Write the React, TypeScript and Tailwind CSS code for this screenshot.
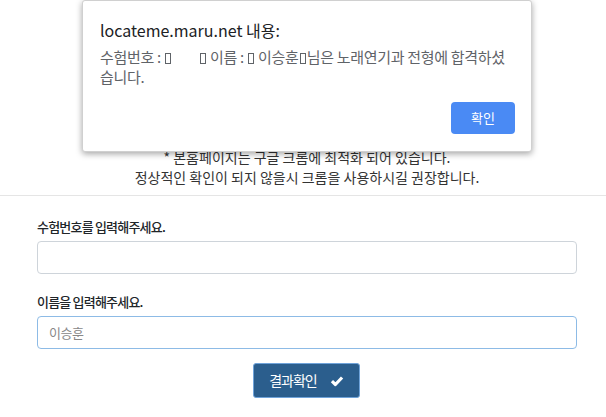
const KR = { fontFamily: '"Noto Sans CJK KR", "Noto Sans", sans-serif' };

function Tofu() {
  return <span className="inline-block w-[6px] h-[11px] border border-[#5f6368] align-[-1px] mx-[1px]" />;
}

function CheckMark() {
  return (
    <svg viewBox="0 0 16 16" className="w-[14px] h-[14px]" fill="none" stroke="currentColor" strokeWidth={3.6} strokeLinejoin="round">
      <path d="M2.2 8.2 L6.2 12 L13.8 4" />
    </svg>
  );
}

function AlertDialog() {
  return (
    <div className="absolute left-[82px] top-0 w-[450px] h-[152px] bg-white border border-[#d0d0d0] rounded-[3px] shadow-[0_2px_6px_rgba(0,0,0,0.35)]">
      <div className="pl-[17px] pr-[18px] pt-[18px]">
        <h2 className="text-[16px] leading-[22px] text-[#202124]">locateme.maru.net 내용:</h2>
        <p className="mt-[6px] text-[15px] leading-[20px] text-[#5f6368] tracking-[-0.3px]">
          수험번호 : <Tofu />
          <span className="inline-block w-[27px]" />
          <Tofu /> 이름 : <Tofu /> 이승훈<Tofu />님은 노래연기과 전형에 합격하셨습니다.
        </p>
      </div>
      <div className="absolute right-[16px] bottom-[17px]">
        <button className="w-[64px] h-[32px] rounded-[4px] bg-[#4a8af4] text-white text-[13px]">확인</button>
      </div>
    </div>
  );
}

export default function App() {
  return (
    <div className="relative w-[606px] h-[417px] bg-white overflow-hidden text-[#212529]" style={KR}>
      {/* notice */}
      <div className="pt-[147px] pb-[8px] pl-[8px] text-center text-[14px] leading-[20px] text-[#333] border-b border-[#e5e5e5]">
        <p>* 본홈페이지는 구글 크롬에 최적화 되어 있습니다.</p>
        <p>정상적인 확인이 되지 않을시 크롬을 사용하시길 권장합니다.</p>
      </div>

      {/* form */}
      <div className="px-[37px] pt-[21px]">
        <label className="block text-[13px] leading-[20px] font-medium tracking-[-0.8px] mb-[4px]">수험번호를 입력해주세요.</label>
        <input className="block w-[540px] h-[33px] border border-[#ced4da] rounded-[4px] px-[12px] text-[14px] outline-none" />

        <label className="block mt-[18px] text-[13px] leading-[20px] font-medium tracking-[-0.8px] mb-[4px]">이름을 입력해주세요.</label>
        <input
          className="block w-[540px] h-[33px] border border-[#8dbbe6] rounded-[4px] px-[11px] text-[13px] outline-none placeholder:text-[#888] tracking-[-0.5px]"
          placeholder="이승훈"
        />

        <div className="flex justify-center mt-[14px] pl-[7px]">
          <button className="flex items-center gap-[13px] h-[35px] px-[15px] rounded-[3px] bg-[#2b5e8d] border border-[#6fa3da] text-white text-[14px] tracking-[-1px]">
            결과확인
            <CheckMark />
          </button>
        </div>
      </div>

      <AlertDialog />
    </div>
  );
}
